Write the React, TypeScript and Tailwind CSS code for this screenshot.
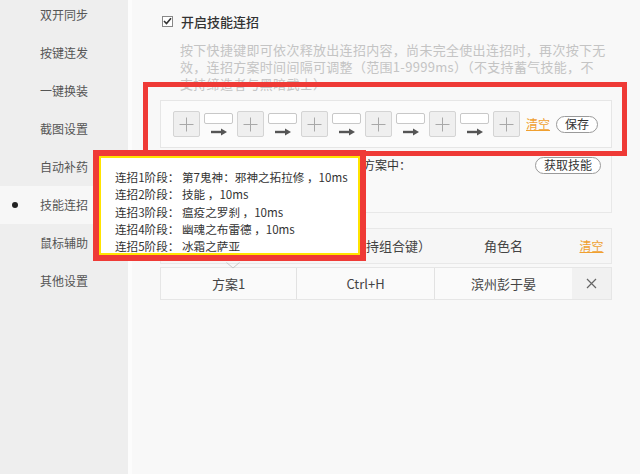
import React from "react";

const menu = [
  "双开同步",
  "按键连发",
  "一键换装",
  "截图设置",
  "自动补药",
  "技能连招",
  "鼠标辅助",
  "其他设置",
];

const stages = [
  "连招1阶段： 第7鬼神：邪神之拓拉修 ，10ms",
  "连招2阶段： 技能 ，10ms",
  "连招3阶段： 瘟疫之罗刹 ，10ms",
  "连招4阶段： 幽魂之布雷德 ，10ms",
  "连招5阶段： 冰霜之萨亚",
];

function PlusBox() {
  return (
    <div className="flex h-[26px] w-[27px] shrink-0 items-center justify-center rounded-[2px] border border-[#d4d4d4] bg-[#efefef]">
      <svg width="15" height="15" viewBox="0 0 15 15">
        <path d="M7.5 0.5v14M0.5 7.5h14" stroke="#a8a8a8" strokeWidth="1" />
      </svg>
    </div>
  );
}

function ArrowSlot() {
  return (
    <div className="flex w-[29px] shrink-0 flex-col items-center gap-[4px]">
      <div className="h-[11px] w-[29px] rounded-[2px] border border-[#c8c8c8] bg-white" />
      <svg width="18" height="8" viewBox="0 0 18 8">
        <path d="M1 4h11" stroke="#555" strokeWidth="2.4" />
        <path d="M11 0.5L17 4L11 7.5Z" fill="#555" />
      </svg>
    </div>
  );
}

function Pill({ children }: { children: React.ReactNode }) {
  return (
    <button
      type="button"
      className="flex h-[17px] items-center rounded-full border border-[#9a9a9a] bg-white px-[8px] text-[12px] leading-none text-[#333]"
    >
      {children}
    </button>
  );
}

export default function App() {
  return (
    <div className="relative flex h-[474px] w-[640px] overflow-hidden font-['Noto_Sans_CJK_SC','Microsoft_YaHei',sans-serif]">
      <aside className="w-[128px] shrink-0 bg-[#eeeeee]">
        <ul className="mt-[-4px]">
          {menu.map((item) =>
            item === "技能连招" ? (
              <li
                key={item}
                className="flex h-[38px] items-center bg-[#f7f7f7] pl-[12px] text-[12px] text-[#555]"
              >
                <span className="mr-[22px] h-[6px] w-[6px] rounded-full bg-[#222]" />
                {item}
              </li>
            ) : (
              <li
                key={item}
                className="flex h-[38px] items-center pl-[40px] text-[12px] text-[#555]"
              >
                {item}
              </li>
            )
          )}
        </ul>
      </aside>

      <main className="flex-1 border-l-[4px] border-[#fcfcfc] bg-[#f8f8f8] pl-[28px] pr-[28px] pt-[12px]">
        <div className="flex h-[18px] items-center gap-[8px] pl-[2px]">
          <span className="flex h-[11px] w-[11px] items-center justify-center border border-[#888] bg-white">
            <svg width="9" height="8" viewBox="0 0 9 8">
              <path d="M1 4l2.5 2.5L8 1.2" stroke="#333" strokeWidth="1.6" fill="none" />
            </svg>
          </span>
          <span className="text-[13px] font-medium leading-none text-[#333]">开启技能连招</span>
        </div>

        <div className="mt-[11px] pl-[20px] text-[13px] leading-[17px] tracking-[0.3px] text-[#c4c4c4]">
          <div className="whitespace-nowrap">按下快捷键即可依次释放出连招内容，尚未完全使出连招时，再次按下无</div>
          <div className="whitespace-nowrap">效，连招方案时间间隔可调整（范围1-9999ms）（不支持蓄气技能，不</div>
          <div className="whitespace-nowrap">支持缔造者与黑暗武士）</div>
        </div>

        <div className="mt-[8px] flex h-[48px] items-center border border-[#e6e6e6] bg-[#fbfbfb] pl-[12px]">
          <div className="flex items-center gap-[4px]">
            <PlusBox />
            <ArrowSlot />
            <PlusBox />
            <ArrowSlot />
            <PlusBox />
            <ArrowSlot />
            <PlusBox />
            <ArrowSlot />
            <PlusBox />
            <ArrowSlot />
            <PlusBox />
          </div>
          <span className="ml-[6px] text-[12px] text-[#f0a030] underline">清空</span>
          <div className="ml-[6px]">
            <Pill>保存</Pill>
          </div>
        </div>

        <div className="mt-[3px] h-[62px] border border-[#e8e8e8] bg-[#f9f9f9] px-[10px] pt-[4px]">
          <div className="flex items-center justify-between">
            <span className="text-[12px] text-[#333]">请获取技能，当前角色技能将添加到方案中：</span>
            <Pill>获取技能</Pill>
          </div>
        </div>

        <div className="mt-[15px] border border-[#e8e8e8] bg-[#f6f6f6]">
          <div className="flex h-[34px] items-center text-[13px] text-[#444]">
            <div className="w-[136px] text-center">方案名</div>
            <div className="w-[138px] text-center">快捷键（支持组合键）</div>
            <div className="w-[137px] text-center">角色名</div>
            <div className="flex-1 text-center text-[12px] text-[#f0a030] underline">清空</div>
          </div>
        </div>
        <div className="mt-[3px] flex h-[33px] border border-[#e6e6e6] bg-[#fafafa] text-[13px] text-[#444]">
          <div className="flex w-[136px] items-center justify-center border-r border-[#e2e2e2]">方案1</div>
          <div className="flex w-[138px] items-center justify-center border-r border-[#e2e2e2]">Ctrl+H</div>
          <div className="flex w-[137px] items-center justify-center">滨州彭于晏</div>
          <div className="flex flex-1 items-center justify-center bg-[#f1f1f1]">
            <svg width="11" height="11" viewBox="0 0 11 11">
              <path d="M1 1l9 9M10 1l-9 9" stroke="#666" strokeWidth="1.2" />
            </svg>
          </div>
        </div>
      </main>

      {/* annotation around combo editor */}
      <div className="absolute left-[143px] top-[82px] h-[74px] w-[484px] border-[5px] border-[#ef3a36]" />

      {/* stage tooltip */}
      <div className="absolute left-[93px] top-[150px] h-[111px] w-[273px] border-[6px] border-[#ef3a36]">
        <div className="h-full w-full border-[2px] border-[#ffe400] bg-white pl-[14px] pt-[11px] text-[11.6px] leading-[17.3px] text-[#333]">
          {stages.map((s) => (
            <div key={s} className="whitespace-pre">
              {s}
            </div>
          ))}
        </div>
      </div>
      <svg className="absolute left-[226px] top-[262px]" width="14" height="7" viewBox="0 0 14 7">
        <path d="M0.5 0.5L7 6L13.5 0.5" stroke="#c8c8c8" strokeWidth="1" fill="none" />
      </svg>
    </div>
  );
}
